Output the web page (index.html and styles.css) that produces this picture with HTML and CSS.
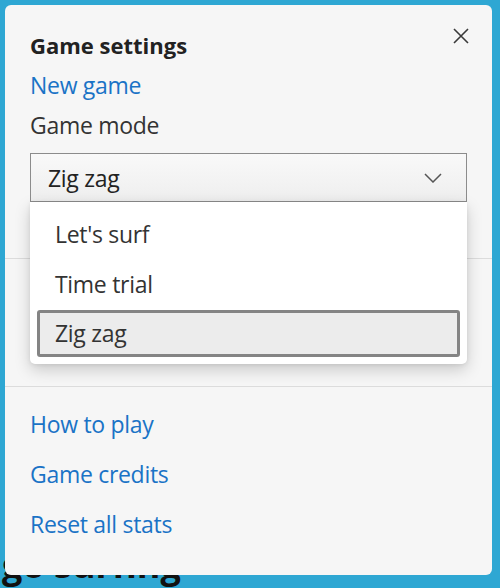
FILE: index.html
```html
<!DOCTYPE html>
<html lang="en">
<head>
<meta charset="utf-8">
<title>Game settings</title>
<link rel="stylesheet" href="styles.css">
</head>
<body>
<main class="game">
  <h1 class="game-title">Let's go surfing</h1>
</main>

<section class="panel" aria-label="Game settings">
  <div class="panel-body">
    <header class="panel-header">
      <h2 class="panel-title">Game settings</h2>
      <svg class="close" width="16" height="16" viewBox="0 0 16 16" aria-label="Close">
        <path d="M1 1 L15 15 M15 1 L1 15" stroke="#3a3a3a" stroke-width="1.6" fill="none"/>
      </svg>
    </header>
    <a class="link" href="#">New game</a>
    <div class="label">Game mode</div>
    <div class="select">
      <span>Zig zag</span>
      <svg class="chevron" width="18" height="10" viewBox="0 0 18 10">
        <path d="M1 1 L9 9 L17 1" stroke="#555" stroke-width="1.5" fill="none"/>
      </svg>
    </div>
  </div>
  <div class="divider"></div>
  <div class="hidden-section"></div>
  <div class="divider"></div>
  <nav class="links">
    <a class="link" href="#">How to play</a>
    <a class="link" href="#">Game credits</a>
    <a class="link" href="#">Reset all stats</a>
  </nav>

  <ul class="dropdown" role="listbox">
    <li class="option">Let's surf</li>
    <li class="option">Time trial</li>
    <li class="option selected">Zig zag</li>
  </ul>
</section>
</body>
</html>
```

FILE: styles.css
```css
* { box-sizing: border-box; }

html, body {
  margin: 0;
  padding: 0;
}

body {
  width: 500px;
  height: 588px;
  overflow: hidden;
  background: #2ea7d3;
  font-family: "Open Sans", "Noto Sans", sans-serif;
  color: #333;
}

.game {
  padding-top: 540px;
}

.game-title {
  margin: 0 0 0 -92px;
  font-size: 36px;
  font-weight: 700;
  line-height: 50px;
  color: #111;
  white-space: nowrap;
}

.panel {
  position: absolute;
  left: 5px;
  top: 5px;
  width: 487px;
  height: 570px;
  background: #f6f6f6;
  border-radius: 6px;
}

.panel-body {
  padding: 20px 25px 0;
}

.panel-header {
  display: flex;
  justify-content: space-between;
  align-items: flex-start;
}

.panel-title {
  margin: 0;
  font-size: 22px;
  font-weight: 700;
  line-height: 40px;
  color: #222;
}

.close {
  margin-top: 3px;
  margin-right: -2px;
}

.link,
.label,
.select,
.option {
  font-size: 23px;
  letter-spacing: -0.3px;
}

.link {
  display: block;
  line-height: 40px;
  color: #1a73c6;
  text-decoration: none;
}

.label {
  line-height: 40px;
  color: #333;
}

.select {
  margin-top: 8px;
  height: 49px;
  border: 1px solid #8c8c8c;
  background: linear-gradient(#f9f9f9, #eeeeee);
  display: flex;
  align-items: center;
  justify-content: space-between;
  padding: 2px 24px 0 17px;
  line-height: 45px;
  color: #222;
}

.chevron {
  margin-top: -2px;
}

.divider {
  height: 1px;
  background: #dcdcdc;
}

.panel-body + .divider {
  margin-top: 56px;
}

.hidden-section {
  height: 127px;
}

.links {
  padding: 12px 25px 0;
}

.links .link {
  line-height: 50px;
}

.dropdown {
  position: absolute;
  left: 25px;
  top: 197px;
  width: 437px;
  height: 162px;
  margin: 0;
  padding: 7px 0 0;
  list-style: none;
  background: #fff;
  border-radius: 0 0 5px 5px;
  box-shadow: 0 6px 16px rgba(0, 0, 0, 0.18), 0 1px 4px rgba(0, 0, 0, 0.08);
}

.option {
  line-height: 50px;
  padding-left: 25px;
  color: #333;
}

.option.selected {
  margin: 1px 7px 0;
  height: 47px;
  line-height: 41px;
  padding-left: 15px;
  border: 3px solid #848484;
  border-radius: 3px;
  background: #ececec;
}
```
